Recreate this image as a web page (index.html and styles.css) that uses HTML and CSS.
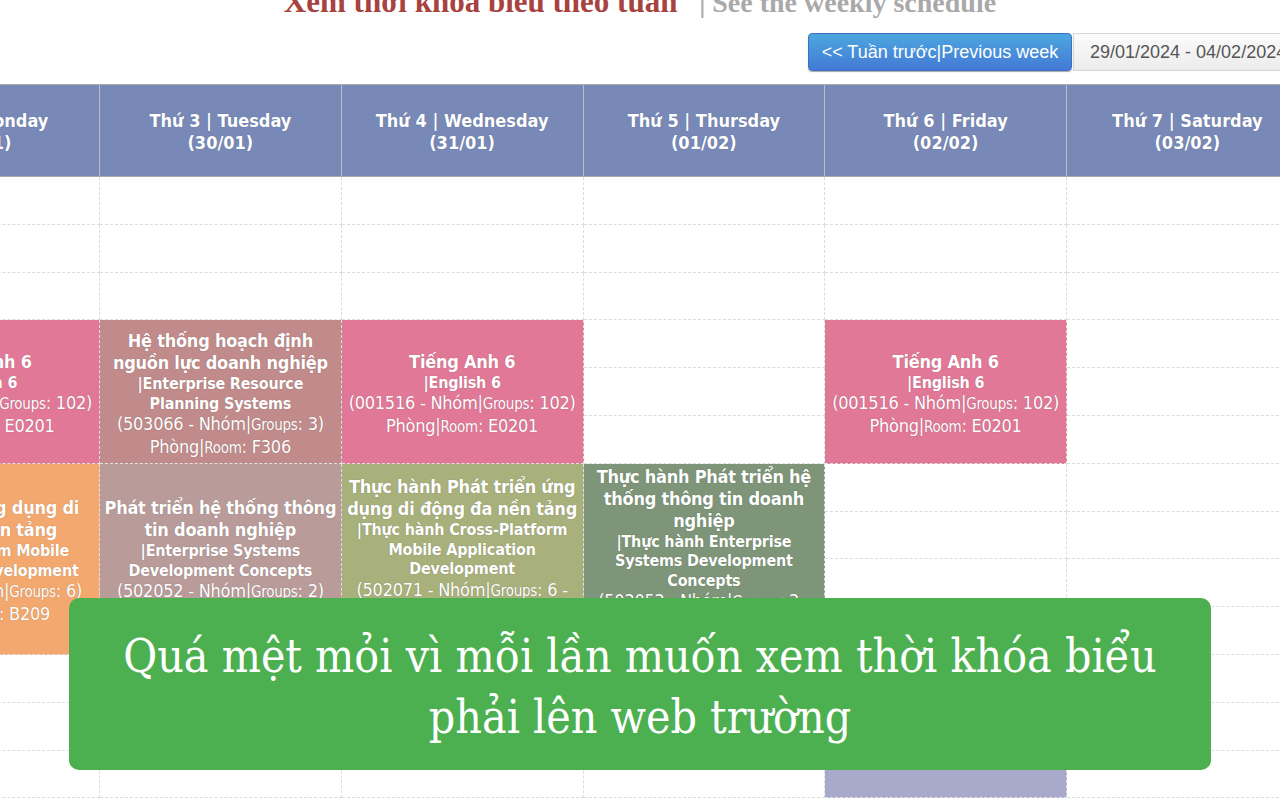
FILE: index.html
```html
<!DOCTYPE html>
<html lang="vi">
<head>
<meta charset="utf-8">
<title>Thời khóa biểu</title>
<link rel="stylesheet" href="styles.css">
</head>
<body>
<h2 class="title"><span class="title-vi">Xem thời khóa biểu theo tuần</span> <span class="title-en">| See the weekly schedule</span></h2>
<div class="toolbar">
  <button class="btn-prev">&lt;&lt; Tuần trước|Previous week</button>
  <div class="date-box">29/01/2024 - 04/02/2024</div>
</div>
<div class="schedule">
  <div class="hd">Thứ 2 | Monday<br>(29/01)</div>
  <div class="hd">Thứ 3 | Tuesday<br>(30/01)</div>
  <div class="hd">Thứ 4 | Wednesday<br>(31/01)</div>
  <div class="hd">Thứ 5 | Thursday<br>(01/02)</div>
  <div class="hd">Thứ 6 | Friday<br>(02/02)</div>
  <div class="hd">Thứ 7 | Saturday<br>(03/02)</div>

  <!-- row 1-3 -->
  <div class="cell"></div><div class="cell"></div><div class="cell"></div><div class="cell"></div><div class="cell"></div><div class="cell"></div>
  <div class="cell"></div><div class="cell"></div><div class="cell"></div><div class="cell"></div><div class="cell"></div><div class="cell"></div>
  <div class="cell"></div><div class="cell"></div><div class="cell"></div><div class="cell"></div><div class="cell"></div><div class="cell"></div>

  <!-- row 4 -->
  <div class="ev span3 pink">
    <div class="ev-t">Tiếng Anh 6</div>
    <div class="ev-s">|English 6</div>
    <div class="ev-i">(001516 - Nhóm|<small>Groups</small>: 102)</div>
    <div class="ev-i">Phòng|<small>Room</small>: E0201</div>
  </div>
  <div class="ev span3 rose">
    <div class="ev-t">Hệ thống hoạch định nguồn lực doanh nghiệp</div>
    <div class="ev-s">|Enterprise Resource Planning Systems</div>
    <div class="ev-i">(503066 - Nhóm|<small>Groups</small>: 3)</div>
    <div class="ev-i">Phòng|<small>Room</small>: F306</div>
  </div>
  <div class="ev span3 pink">
    <div class="ev-t">Tiếng Anh 6</div>
    <div class="ev-s">|English 6</div>
    <div class="ev-i">(001516 - Nhóm|<small>Groups</small>: 102)</div>
    <div class="ev-i">Phòng|<small>Room</small>: E0201</div>
  </div>
  <div class="cell"></div>
  <div class="ev span3 pink">
    <div class="ev-t">Tiếng Anh 6</div>
    <div class="ev-s">|English 6</div>
    <div class="ev-i">(001516 - Nhóm|<small>Groups</small>: 102)</div>
    <div class="ev-i">Phòng|<small>Room</small>: E0201</div>
  </div>
  <div class="cell"></div>
  <!-- row 5-6 -->
  <div class="cell"></div><div class="cell"></div>
  <div class="cell"></div><div class="cell"></div>

  <!-- row 7 -->
  <div class="ev span4 orange">
    <div class="ev-t">Phát triển ứng dụng di động đa nền tảng</div>
    <div class="ev-s">|Cross-Platform Mobile Application Development</div>
    <div class="ev-i">(502071 - Nhóm|<small>Groups</small>: 6)</div>
    <div class="ev-i">Phòng|<small>Room</small>: B209</div>
  </div>
  <div class="ev span4 mauve">
    <div class="ev-t">Phát triển hệ thống thông tin doanh nghiệp</div>
    <div class="ev-s">|Enterprise Systems Development Concepts</div>
    <div class="ev-i">(502052 - Nhóm|<small>Groups</small>: 2)</div>
    <div class="ev-i">Phòng|<small>Room</small>: B304</div>
  </div>
  <div class="ev span4 olive">
    <div class="ev-t">Thực hành Phát triển ứng dụng di động đa nền tảng</div>
    <div class="ev-s">|Thực hành Cross-Platform Mobile Application Development</div>
    <div class="ev-i">(502071 - Nhóm|<small>Groups</small>: 6 - Tổ|<small>Sub-group</small>: 1)</div>
    <div class="ev-i">Phòng|<small>Room</small>: C506</div>
  </div>
  <div class="ev span4 sage">
    <div class="ev-t">Thực hành Phát triển hệ thống thông tin doanh nghiệp</div>
    <div class="ev-s">|Thực hành Enterprise Systems Development Concepts</div>
    <div class="ev-i">(502052 - Nhóm|<small>Groups</small>: 2 - Tổ|<small>Sub-group</small>: 1)</div>
    <div class="ev-i">Phòng|<small>Room</small>: C505</div>
  </div>
  <div class="cell"></div><div class="cell"></div>
  <!-- rows 8-10 -->
  <div class="cell"></div><div class="cell"></div>
  <div class="cell"></div><div class="cell"></div>
  <div class="cell"></div><div class="cell"></div>

  <!-- row 11 -->
  <div class="cell"></div><div class="cell"></div><div class="cell"></div><div class="cell"></div>
  <div class="ev span3 lavender">
    <div class="ev-t">Tiếng Anh 6</div>
  </div>
  <div class="cell"></div>
  <!-- rows 12-13 -->
  <div class="cell"></div><div class="cell"></div><div class="cell"></div><div class="cell"></div><div class="cell"></div>
  <div class="cell"></div><div class="cell"></div><div class="cell"></div><div class="cell"></div><div class="cell"></div>
</div>

<div class="banner">Quá mệt mỏi vì mỗi lần muốn xem thời khóa biểu phải lên web trường</div>
</body>
</html>
```

FILE: styles.css
```css
html, body {
  margin: 0;
  padding: 0;
}
body {
  width: 1280px;
  height: 800px;
  overflow: hidden;
  position: relative;
  background: #fff;
  font-family: "DejaVu Sans Condensed", "DejaVu Sans", sans-serif;
  font-stretch: condensed;
}

.title {
  margin: -16px 0 0;
  height: 36px;
  font-family: "Liberation Serif", serif;
  font-weight: bold;
  font-size: 31px;
  line-height: 36px;
  text-align: center;
  white-space: nowrap;
}
.title-vi { color: #a8423e; }
.title-en { color: #a9a9a9; margin-left: 14px; font-size: 28px; }

.toolbar {
  display: flex;
  justify-content: flex-end;
  margin: 13px -40px 0 0;
  height: 38px;
}
.btn-prev {
  box-sizing: border-box;
  width: 264px;
  height: 38px;
  margin: 0;
  padding: 0;
  border: 1px solid #3b6fc4;
  border-radius: 4px;
  background: linear-gradient(#4ca7df, #4479d5);
  box-shadow: 0 1px 1px rgba(0,0,0,.35);
  color: #fff;
  font-family: "Liberation Sans", Arial, sans-serif;
  font-size: 18px;
}
.date-box {
  box-sizing: border-box;
  width: 247px;
  height: 38px;
  margin-left: 1px;
  padding: 0 0 0 16px;
  border: 1px solid #d6d6d6;
  background: linear-gradient(#fbfbfb, #ececec);
  color: #555;
  font-family: "Liberation Sans", Arial, sans-serif;
  font-size: 18px;
  line-height: 36px;
  white-space: nowrap;
}

.schedule {
  display: grid;
  grid-template-columns: repeat(6, 241.75px);
  grid-template-rows: 92px repeat(13, 47.8px);
  margin: 13px 0 0 -141.75px;
  width: 1450.5px;
  border-top: 1px solid #aaa;
}

.hd {
  display: flex;
  align-items: center;
  justify-content: center;
  text-align: center;
  background: #7889b8;
  color: #fff;
  font-weight: bold;
  font-size: 18px;
  line-height: 22px;
  padding-top: 2px;
  border-right: 1px solid #bdbdbd;
  border-bottom: 1px solid #a9a9a9;
  text-shadow: 0 0 1px rgba(0,0,0,.25);
}

.cell {
  border-right: 1px dashed #dcdcdc;
  border-bottom: 1px dashed #dcdcdc;
}

.ev {
  display: flex;
  flex-direction: column;
  justify-content: safe center;
  align-items: center;
  text-align: center;
  padding: 6px 4px 0;
  overflow: hidden;
  color: #fff;
  letter-spacing: -0.25px;
  border-right: 1px dashed #e2e2e2;
  border-bottom: 1px dashed #e2e2e2;
  text-shadow: 0 0 1px rgba(0,0,0,.3);
}
.span3 { grid-row: span 3; }
.span4 { grid-row: span 4; }

.ev-t {
  font-weight: bold;
  font-size: 18px;
  line-height: 22px;
}
.ev-s {
  font-weight: bold;
  font-size: 16px;
  line-height: 19.5px;
  letter-spacing: -0.2px;
}
.ev-i {
  font-size: 18px;
  line-height: 21px;
}
.ev-i small { font-size: 15px; }

.pink { background: #e27898; }
.rose { background: #c08b8a; }
.mauve { background: #b99b9a; }
.orange { background: #f3a86f; }
.olive { background: #a8b07c; }
.sage { background: #7e9579; padding-top: 2px; }
.lavender { background: #a9a9cc; }

.banner {
  position: absolute;
  left: 69px;
  top: 598px;
  width: 1142px;
  height: 172px;
  box-sizing: border-box;
  padding: 28px 40px 0;
  border-radius: 10px;
  background: #4caf50;
  color: #fff;
  font-family: "DejaVu Serif", serif;
  font-size: 46px;
  line-height: 61px;
  text-align: center;
}
```
